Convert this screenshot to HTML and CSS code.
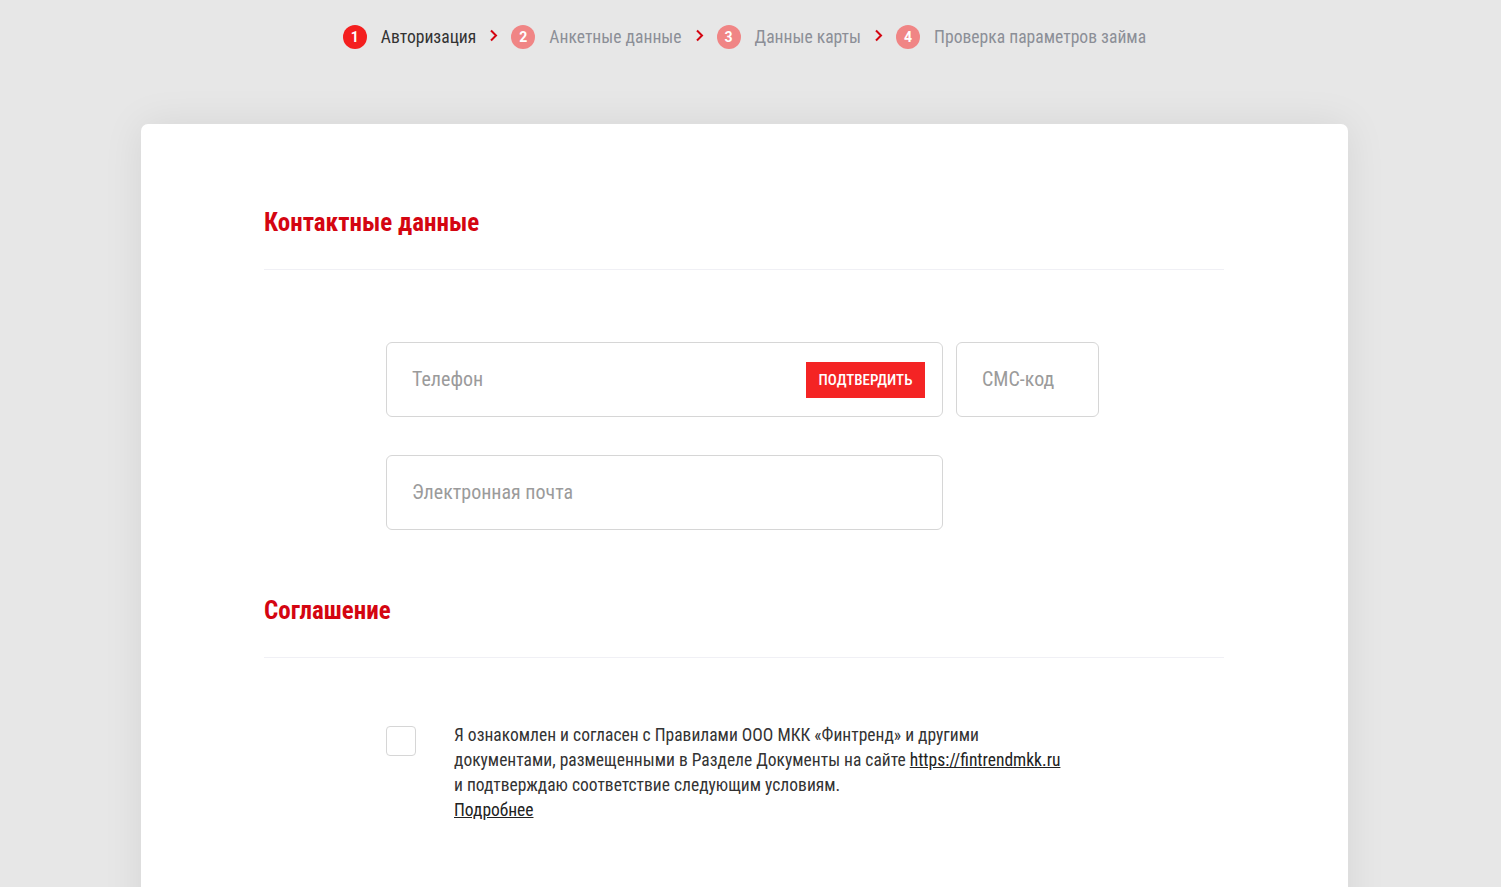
FILE: index.html
```html
<!DOCTYPE html>
<html lang="ru">
<head>
<meta charset="utf-8">
<title>Авторизация</title>
<link rel="stylesheet" href="styles.css">
</head>
<body>
<div class="page">
  <nav class="steps">
    <div class="step active"><span class="num">1</span><span class="label">Авторизация</span></div>
    <svg class="chev" width="9" height="13" viewBox="0 0 9 13"><path d="M2 1.5 L7 6.5 L2 11.5" fill="none" stroke="#d40511" stroke-width="2"/></svg>
    <div class="step"><span class="num">2</span><span class="label">Анкетные данные</span></div>
    <svg class="chev" width="9" height="13" viewBox="0 0 9 13"><path d="M2 1.5 L7 6.5 L2 11.5" fill="none" stroke="#d40511" stroke-width="2"/></svg>
    <div class="step"><span class="num">3</span><span class="label">Данные карты</span></div>
    <svg class="chev" width="9" height="13" viewBox="0 0 9 13"><path d="M2 1.5 L7 6.5 L2 11.5" fill="none" stroke="#d40511" stroke-width="2"/></svg>
    <div class="step"><span class="num">4</span><span class="label">Проверка параметров займа</span></div>
  </nav>

  <main class="card">
    <section class="section">
      <h2 class="section-title">Контактные данные</h2>
      <div class="form">
        <div class="row">
          <div class="field field-phone">
            <span class="placeholder">Телефон</span>
            <button class="confirm" type="button">ПОДТВЕРДИТЬ</button>
          </div>
          <div class="field field-sms">
            <span class="placeholder">СМС-код</span>
          </div>
        </div>
        <div class="row">
          <div class="field field-phone">
            <span class="placeholder">Электронная почта</span>
          </div>
        </div>
      </div>
    </section>

    <section class="section">
      <h2 class="section-title">Соглашение</h2>
      <div class="agree">
        <span class="checkbox"></span>
        <p class="agree-text">Я ознакомлен и согласен с Правилами ООО МКК «Финтренд» и другими<br>документами, размещенными в Разделе Документы на сайте <a href="#">https://fintrendmkk.ru</a><br>и подтверждаю соответствие следующим условиям.<br><a href="#">Подробнее</a></p>
      </div>
    </section>
  </main>
</div>
</body>
</html>
```

FILE: styles.css
```css
* { box-sizing: border-box; }

html, body {
  margin: 0;
  padding: 0;
  background: #e7e7e7;
  height: 100%;
  overflow: hidden;
}

body {
  font-family: "Roboto Condensed", "Liberation Sans Narrow", Roboto, sans-serif;
  color: #333;
}

.page {
  padding-right: 12px;
}

.steps {
  display: flex;
  justify-content: center;
  align-items: center;
  gap: 13px;
  height: 72px;
  padding-top: 1px;
}

.step {
  display: flex;
  align-items: center;
  gap: 14px;
}

.num {
  width: 24px;
  height: 24px;
  border-radius: 50%;
  background: #f08585;
  color: #fff;
  font-family: Roboto, sans-serif;
  font-size: 14px;
  font-weight: 700;
  display: flex;
  align-items: center;
  justify-content: center;
}

.label {
  font-size: 17.6px;
  color: #8c8f97;
}

.step.active .num { background: #f41f1f; }
.step.active .label { color: #333; }

.chev { display: block; margin-top: -2px; }

.card {
  width: 1207px;
  margin: 52px auto 0;
  background: #fff;
  border-radius: 7px;
  box-shadow: 0 0 40px rgba(0, 0, 0, 0.08);
  padding: 84px 124px 200px 123px;
  min-height: 900px;
}

.section-title {
  margin: 0;
  font-size: 25px;
  line-height: 30px;
  font-weight: 700;
  color: #d40511;
  padding-bottom: 31px;
  border-bottom: 1px solid #f0f0f5;
}

.form {
  margin: 72px 0 0 122px;
  display: flex;
  flex-direction: column;
  gap: 38px;
}

.row {
  display: flex;
  gap: 13px;
}

.field {
  height: 75px;
  border: 1px solid #d6d6d6;
  border-radius: 6px;
  display: flex;
  align-items: center;
  justify-content: space-between;
  padding: 0 17px 0 25px;
  background: #fff;
}

.field-phone { width: 557px; }
.field-sms { width: 143px; }

.placeholder {
  font-size: 20px;
  color: #9b9b9b;
  margin-top: -2px;
}

.confirm {
  border: 0;
  background: #f42424;
  color: #fff;
  font-family: inherit;
  font-size: 15px;
  font-weight: 500;
  height: 36px;
  width: 119px;
  padding: 0;
  cursor: pointer;
}

.section + .section {
  margin-top: 66px;
}

.agree {
  margin: 65px 0 0 122px;
  display: flex;
  gap: 38px;
  align-items: flex-start;
}

.checkbox {
  flex: none;
  width: 30px;
  height: 30px;
  border: 1px solid #d6d6d6;
  border-radius: 4px;
  margin-top: 3px;
}

.agree-text {
  margin: 0;
  font-size: 17.5px;
  line-height: 25px;
  color: #333;
}

.agree-text a {
  color: #222;
  text-decoration: underline;
}
```
